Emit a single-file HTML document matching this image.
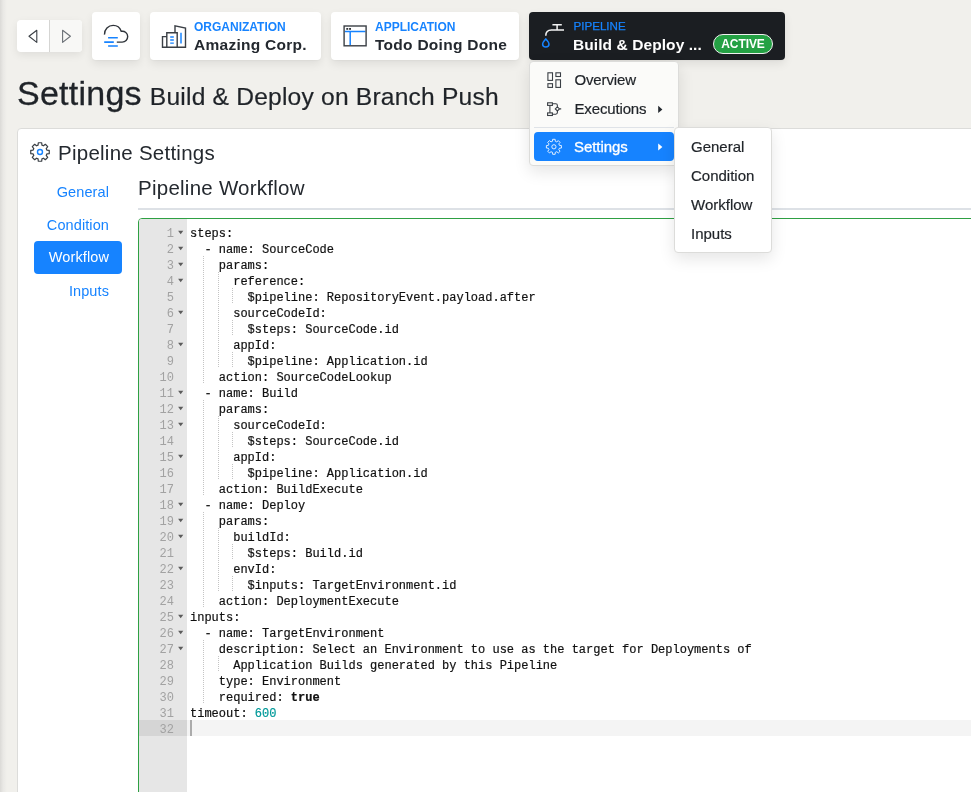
<!DOCTYPE html>
<html>
<head>
<meta charset="utf-8">
<title>Settings</title>
<style>
*{box-sizing:border-box;margin:0;padding:0}
html,body{width:971px;height:792px;overflow:hidden}
body{background:#f1f0ec;font-family:"Liberation Sans",sans-serif;color:#1f2328;position:relative}
#wrap{position:absolute;left:0;top:0;width:971px;height:792px;overflow:hidden;will-change:transform}
.abs{position:absolute}
#edge{left:0;top:0;width:7px;height:792px;background:linear-gradient(to right,#dbdad7 0,#e9e8e5 45%,#f1f0ec 100%)}
.btn{position:absolute;background:#fff;border-radius:4px;box-shadow:0 4px 10px rgba(0,0,0,.08),0 1px 2px rgba(0,0,0,.04)}
.lbl{position:absolute;font-size:12px;font-weight:bold;color:#1683ff;letter-spacing:0;white-space:nowrap}
.nm{position:absolute;font-size:15.5px;letter-spacing:.27px;font-weight:bold;color:#24292f;white-space:nowrap}
#nav{left:17px;top:20px;width:65px;height:32px;background:#fff;border-radius:4px;box-shadow:0 3px 8px rgba(0,0,0,.08)}
#nav .r{position:absolute;left:32px;top:0;width:33px;height:32px;background:#f8f8f6;border-left:1px solid #d5d5d3;border-radius:0 4px 4px 0}
#pipe{background:#1b1e22}
#pipe .nm{color:#fff}
#badge{position:absolute;left:184px;top:22px;width:60px;height:20px;border-radius:10px;background:#24a144;border:1px solid #f0f0f0;color:#fff;font-size:12px;font-weight:bold;text-align:center;line-height:18px;letter-spacing:-.1px}
h1{-webkit-text-stroke:.3px #1f2328;position:absolute;left:17px;top:71px;font-weight:normal;font-size:34px;letter-spacing:.25px;line-height:45px;white-space:nowrap;color:#1f2328}
h1 small{font-size:24.6px;letter-spacing:.2px;margin-left:8px;-webkit-text-stroke:.2px #1f2328}
#card{left:17px;top:128px;width:970px;height:700px;background:#fff;border:1px solid #dcdcda;border-radius:4px}
#card h2{position:absolute;left:40px;top:10px;font-size:22px;font-weight:normal;line-height:28px;color:#24292f;white-space:nowrap}
.sn{line-height:16px;position:absolute;font-size:14.5px;letter-spacing:.1px;color:#1683ff;white-space:nowrap;text-align:right;width:80px}
#wfbtn{left:34px;top:241px;width:88px;height:33px;background:#1683ff;border-radius:4px;color:#fff;font-size:14.5px;letter-spacing:.1px;text-align:right;padding-right:13px;line-height:33px}
#pw{left:138px;top:174px;font-size:20.5px;letter-spacing:.25px;line-height:28px;color:#24292f;white-space:nowrap}
#hr{left:138px;top:208px;width:840px;height:2px;background:#dde1e6}
#ed{left:138px;top:218px;width:840px;height:600px;border:1px solid #2ea043;border-radius:4px 0 0 0;background:#fff;overflow:hidden}
#gut{position:absolute;left:0;top:0;width:48px;height:600px;background:#e6e6e6}
#act{position:absolute;left:0;top:501px;width:840px;height:16px;background:#f4f4f4}
#act i{position:absolute;left:0;top:0;width:48px;height:16px;background:#d5d5d5}
#cur{position:absolute;left:51px;top:501px;width:2px;height:16px;background:#ababab}
pre{font-family:"Liberation Mono",monospace;font-size:12px;line-height:16px}
#ln{position:absolute;left:0;top:7px;width:35px;text-align:right;color:#a2a2a2}
#fold{position:absolute;left:38px;top:5px;color:#555;font-size:8px}
#code{position:absolute;left:51px;top:7px;color:#111;-webkit-text-stroke:.2px #111}
#code b{font-weight:bold}
#code u{text-decoration:none;color:#009999;-webkit-text-stroke:.2px #009999}
.ig{position:absolute;width:1px;height:16px;background:repeating-linear-gradient(to bottom,#c4c4c4 0,#c4c4c4 1px,transparent 1px,transparent 2px)}
.menu{position:absolute;background:#fbfbf9;border:1px solid #dcdcda;border-radius:4px;box-shadow:0 6px 16px rgba(0,0,0,.10)}
.mi{position:absolute;font-size:15px;color:#1f2328;white-space:nowrap;line-height:20px;-webkit-text-stroke:.2px #1f2328}
#msel{position:absolute;left:4px;top:70px;width:140px;height:29px;background:#1683ff;border-radius:4px}
</style>
</head>
<body>
<div id="wrap">
<div id="edge" class="abs"></div>

<div id="nav" class="abs">
  <div class="r"></div>
  <svg class="abs" style="left:0;top:0" width="65" height="32" viewBox="0 0 65 32">
    <path d="M19.8 10.2 L12 16.3 L19.8 22.4 Z" fill="none" stroke="#3a3f45" stroke-width="1.1" stroke-linejoin="round"/>
    <path d="M45.6 10.2 L53.4 16.3 L45.6 22.4 Z" fill="none" stroke="#6b7076" stroke-width="1.1" stroke-linejoin="round"/>
  </svg>
</div>

<div class="btn" style="left:92px;top:12px;width:48px;height:48px">
  <svg class="abs" style="left:0;top:0" width="48" height="48" viewBox="0 0 48 48">
    <path d="M12.5 22.6 C12.3 17.3 16.3 13.4 21.2 13.4 C25.2 13.4 28 15.8 29.2 19.3 C32.8 18.6 35.7 21.2 35.7 24.6 C35.7 27.7 33.3 30.1 30.2 30.1 L24.8 30.1" fill="none" stroke="#2f343a" stroke-width="1.4" stroke-linecap="butt"/>
    <path d="M16.1 25.8 H25.8 M12.2 30.1 H21.8 M16.1 34 H25.8" fill="none" stroke="#1683ff" stroke-width="1.6"/>
  </svg>
</div>

<div class="btn" style="left:150px;top:12px;width:171px;height:48px">
  <svg class="abs" style="left:0;top:0" width="48" height="48" viewBox="0 0 48 48">
    <path d="M12.5 35.9 V24.6 H16.8 M16.8 35.2 V20.7 H27.2 V35.2 M25 20.7 V13.9 L35.5 16.1 V35.9 M12.5 35.2 H35.5" fill="none" stroke="#3a3f45" stroke-width="1.4" stroke-linejoin="miter"/>
    <path d="M31 20.7 V31.4" stroke="#1683ff" stroke-width="1.5" fill="none"/>
    <path d="M20.2 25 H23.8 M20.2 28 H23.8 M20.2 31.1 H23.8" stroke="#1683ff" stroke-width="1.3" fill="none"/>
  </svg>
  <div class="lbl" style="left:44px;top:8px">ORGANIZATION</div>
  <div class="nm" style="left:44px;top:24px">Amazing Corp.</div>
</div>

<div class="btn" style="left:331px;top:12px;width:188px;height:48px">
  <svg class="abs" style="left:0;top:0" width="48" height="48" viewBox="0 0 48 48">
    <path d="M13.8 19.5 H34.4 M19.2 19.5 V33.1" stroke="#1683ff" stroke-width="1.5" fill="none"/>
    <rect x="13.1" y="14" width="22" height="19.8" fill="none" stroke="#3a3f45" stroke-width="1.4"/>
    <rect x="15.3" y="16" width="1.9" height="1.8" fill="#2f343a"/><rect x="18.1" y="16" width="1.9" height="1.8" fill="#2f343a"/>
  </svg>
  <div class="lbl" style="left:44px;top:8px">APPLICATION</div>
  <div class="nm" style="left:44px;top:24px">Todo Doing Done</div>
</div>

<div class="btn" id="pipe" style="left:529px;top:12px;width:256px;height:48px">
  <svg class="abs" style="left:0;top:0" width="48" height="48" viewBox="0 0 48 48">
    <path d="M16.8 23.8 C16.8 19.8 18.6 18.05 22.4 18.05 H35 M28.1 18.05 V12.7 M23.4 12.7 H32.8" fill="none" stroke="#f4f4f4" stroke-width="1.5"/>
    <path d="M16.8 26.8 C15.4 29 13.6 30.2 13.6 32 C13.6 33.7 15 35 16.8 35 C18.6 35 20 33.7 20 32 C20 30.2 18.2 29 16.8 26.8 Z" fill="none" stroke="#1683ff" stroke-width="1.5" stroke-linejoin="round"/>
  </svg>
  <div class="lbl" style="left:44.5px;top:7px;font-weight:normal;font-size:11.6px;-webkit-text-stroke:.25px #1683ff">PIPELINE</div>
  <div class="nm" style="left:44px;top:24px;letter-spacing:.08px">Build &amp; Deploy ...</div>
  <div id="badge">ACTIVE</div>
</div>

<h1>Settings<small>Build &amp; Deploy on Branch Push</small></h1>

<div id="card" class="abs"></div>
<svg class="abs" style="left:29px;top:141px" width="22" height="22" viewBox="0 0 22 22">
  <g fill="none" stroke="#3a3f45" stroke-width="1.2" stroke-linejoin="round">
  <path d="M9.07 4.17 L9.31 1.75 L12.69 1.75 L12.93 4.17 L14.47 4.81 L16.34 3.27 L18.73 5.66 L17.19 7.53 L17.83 9.07 L20.25 9.31 L20.25 12.69 L17.83 12.93 L17.19 14.47 L18.73 16.34 L16.34 18.73 L14.47 17.19 L12.93 17.83 L12.69 20.25 L9.31 20.25 L9.07 17.83 L7.53 17.19 L5.66 18.73 L3.27 16.34 L4.81 14.47 L4.17 12.93 L1.75 12.69 L1.75 9.31 L4.17 9.07 L4.81 7.53 L3.27 5.66 L5.66 3.27 L7.53 4.81 Z"/>
  </g>
  <circle cx="11" cy="11" r="2.5" fill="none" stroke="#1683ff" stroke-width="1.4"/>
</svg>
<div class="abs" style="left:58px;top:139px;font-size:20.5px;letter-spacing:.25px;line-height:28px;color:#24292f;white-space:nowrap">Pipeline Settings</div>

<div class="sn abs" style="left:29px;top:184px">General</div>
<div class="sn abs" style="left:29px;top:217px">Condition</div>
<div id="wfbtn" class="abs">Workflow</div>
<div class="sn abs" style="left:29px;top:283px">Inputs</div>

<div id="pw" class="abs">Pipeline Workflow</div>
<div id="hr" class="abs"></div>

<div id="ed" class="abs">
  <div id="gut"></div>
  <div id="act"><i></i></div>
  <div id="cur"></div>
<svg class="abs" style="left:0;top:0" width="120" height="560" viewBox="139 219 120 560">
<path d="M178.1 230.8 H183.3 L180.7 234.2 Z" fill="#5c5c5c"/>
<path d="M178.1 246.8 H183.3 L180.7 250.2 Z" fill="#5c5c5c"/>
<path d="M178.1 262.8 H183.3 L180.7 266.2 Z" fill="#5c5c5c"/>
<path d="M178.1 278.8 H183.3 L180.7 282.2 Z" fill="#5c5c5c"/>
<path d="M178.1 310.8 H183.3 L180.7 314.2 Z" fill="#5c5c5c"/>
<path d="M178.1 342.8 H183.3 L180.7 346.2 Z" fill="#5c5c5c"/>
<path d="M178.1 390.8 H183.3 L180.7 394.2 Z" fill="#5c5c5c"/>
<path d="M178.1 406.8 H183.3 L180.7 410.2 Z" fill="#5c5c5c"/>
<path d="M178.1 422.8 H183.3 L180.7 426.2 Z" fill="#5c5c5c"/>
<path d="M178.1 454.8 H183.3 L180.7 458.2 Z" fill="#5c5c5c"/>
<path d="M178.1 502.8 H183.3 L180.7 506.2 Z" fill="#5c5c5c"/>
<path d="M178.1 518.8 H183.3 L180.7 522.2 Z" fill="#5c5c5c"/>
<path d="M178.1 534.8 H183.3 L180.7 538.2 Z" fill="#5c5c5c"/>
<path d="M178.1 566.8 H183.3 L180.7 570.2 Z" fill="#5c5c5c"/>
<path d="M178.1 614.8 H183.3 L180.7 618.2 Z" fill="#5c5c5c"/>
<path d="M178.1 630.8 H183.3 L180.7 634.2 Z" fill="#5c5c5c"/>
<path d="M178.1 646.8 H183.3 L180.7 650.2 Z" fill="#5c5c5c"/>
</svg>
<div class="ig" style="left:64.4px;top:37px"></div><div class="ig" style="left:64.4px;top:53px"></div><div class="ig" style="left:79.0px;top:53px"></div><div class="ig" style="left:64.4px;top:69px"></div><div class="ig" style="left:79.0px;top:69px"></div><div class="ig" style="left:93.4px;top:69px"></div><div class="ig" style="left:64.4px;top:85px"></div><div class="ig" style="left:79.0px;top:85px"></div><div class="ig" style="left:64.4px;top:101px"></div><div class="ig" style="left:79.0px;top:101px"></div><div class="ig" style="left:93.4px;top:101px"></div><div class="ig" style="left:64.4px;top:117px"></div><div class="ig" style="left:79.0px;top:117px"></div><div class="ig" style="left:64.4px;top:133px"></div><div class="ig" style="left:79.0px;top:133px"></div><div class="ig" style="left:93.4px;top:133px"></div><div class="ig" style="left:64.4px;top:149px"></div><div class="ig" style="left:64.4px;top:181px"></div><div class="ig" style="left:64.4px;top:197px"></div><div class="ig" style="left:79.0px;top:197px"></div><div class="ig" style="left:64.4px;top:213px"></div><div class="ig" style="left:79.0px;top:213px"></div><div class="ig" style="left:93.4px;top:213px"></div><div class="ig" style="left:64.4px;top:229px"></div><div class="ig" style="left:79.0px;top:229px"></div><div class="ig" style="left:64.4px;top:245px"></div><div class="ig" style="left:79.0px;top:245px"></div><div class="ig" style="left:93.4px;top:245px"></div><div class="ig" style="left:64.4px;top:261px"></div><div class="ig" style="left:64.4px;top:293px"></div><div class="ig" style="left:64.4px;top:309px"></div><div class="ig" style="left:79.0px;top:309px"></div><div class="ig" style="left:64.4px;top:325px"></div><div class="ig" style="left:79.0px;top:325px"></div><div class="ig" style="left:93.4px;top:325px"></div><div class="ig" style="left:64.4px;top:341px"></div><div class="ig" style="left:79.0px;top:341px"></div><div class="ig" style="left:64.4px;top:357px"></div><div class="ig" style="left:79.0px;top:357px"></div><div class="ig" style="left:93.4px;top:357px"></div><div class="ig" style="left:64.4px;top:373px"></div><div class="ig" style="left:64.4px;top:421px"></div><div class="ig" style="left:64.4px;top:437px"></div><div class="ig" style="left:79.0px;top:437px"></div><div class="ig" style="left:64.4px;top:453px"></div><div class="ig" style="left:64.4px;top:469px"></div>
<pre id="ln">1
2
3
4
5
6
7
8
9
10
11
12
13
14
15
16
17
18
19
20
21
22
23
24
25
26
27
28
29
30
31
32</pre>
<pre id="code">steps:
  - name: SourceCode
    params:
      reference:
        $pipeline: RepositoryEvent.payload.after
      sourceCodeId:
        $steps: SourceCode.id
      appId:
        $pipeline: Application.id
    action: SourceCodeLookup
  - name: Build
    params:
      sourceCodeId:
        $steps: SourceCode.id
      appId:
        $pipeline: Application.id
    action: BuildExecute
  - name: Deploy
    params:
      buildId:
        $steps: Build.id
      envId:
        $inputs: TargetEnvironment.id
    action: DeploymentExecute
inputs:
  - name: TargetEnvironment
    description: Select an Environment to use as the target for Deployments of
      Application Builds generated by this Pipeline
    type: Environment
    required: <b>true</b>
timeout: <u>600</u></pre>
</div>

<div class="menu" style="left:529px;top:61px;width:150px;height:105px">
  <div class="abs" style="left:4px;top:65px;width:140px;height:1px;background:#dfe3e8"></div>
  <div id="msel"></div>
  <svg class="abs" style="left:0;top:0" width="148" height="103" viewBox="530 62 148 103">
    <g fill="none" stroke="#3a3f45" stroke-width="1.1">
      <rect x="547.9" y="72.8" width="4.6" height="7.6"/>
      <rect x="555.9" y="72.8" width="4.6" height="3.7"/>
      <rect x="547.9" y="83.7" width="4.6" height="3.7"/>
      <rect x="555.9" y="79.8" width="4.6" height="7.6"/>
      <rect x="547.6" y="102.8" width="4.8" height="2.6"/>
      <rect x="547.6" y="112.9" width="4.8" height="2.6"/>
      <path d="M549.9 105.4 V112.9 M552.4 103.8 H555.8 Q557.4 103.8 557.4 105.4 V106.8 M557.4 111 V112.6 Q557.4 114.2 555.8 114.2 H552.4"/>
      <path d="M557.4 106.8 L559.5 108.9 L557.4 111 L555.3 108.9 Z M559.5 108.9 H561.2"/>
    </g>
    <path d="M658.2 105.8 L662.4 109.4 L658.2 113 Z" fill="#24292f"/>
    <path d="M658.2 143.4 L662.4 147 L658.2 150.6 Z" fill="#fff"/>
    <g transform="translate(553.9 146.8)" fill="none" stroke="#fff" stroke-width="0.85" stroke-linejoin="round">
      <path d="M-1.42 -5.52 L-1.25 -7.50 L1.25 -7.50 L1.42 -5.52 L2.90 -4.91 L4.42 -6.18 L6.18 -4.42 L4.91 -2.90 L5.52 -1.42 L7.50 -1.25 L7.50 1.25 L5.52 1.42 L4.91 2.90 L6.18 4.42 L4.42 6.18 L2.90 4.91 L1.42 5.52 L1.25 7.50 L-1.25 7.50 L-1.42 5.52 L-2.90 4.91 L-4.42 6.18 L-6.18 4.42 L-4.91 2.90 L-5.52 1.42 L-7.50 1.25 L-7.50 -1.25 L-5.52 -1.42 L-4.91 -2.90 L-6.18 -4.42 L-4.42 -6.18 L-2.90 -4.91 Z"/>
      <circle cx="0" cy="0" r="2.1"/>
    </g>
  </svg>
  <div class="mi" style="left:44.5px;top:8px;letter-spacing:-.15px">Overview</div>
  <div class="mi" style="left:44.5px;top:37px;letter-spacing:-.15px">Executions</div>
  <div class="mi" style="left:44px;top:75px;color:#fff;-webkit-text-stroke:.3px #fff;letter-spacing:-.05px">Settings</div>
</div>
<div class="menu" style="left:674px;top:127px;width:98px;height:126px;background:#fff">
  <div class="mi" style="left:16px;top:9px">General</div>
  <div class="mi" style="left:16px;top:38px">Condition</div>
  <div class="mi" style="left:16px;top:67px">Workflow</div>
  <div class="mi" style="left:16px;top:96px">Inputs</div>
</div>
</div>
</body>
</html>
